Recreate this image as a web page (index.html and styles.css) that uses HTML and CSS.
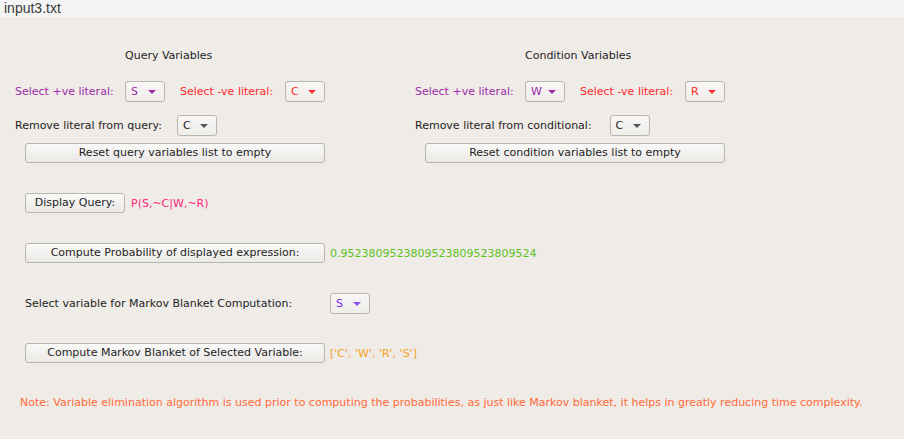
FILE: index.html
```html
<!DOCTYPE html>
<html>
<head>
<meta charset="utf-8">
<link rel="stylesheet" href="styles.css">
</head>
<body>
<div class="titlebar">input3.txt</div>
<div class="main">
  <div class="panels">
    <div class="panel">
      <div class="heading">Query Variables</div>
      <div class="row row-select">
        <span class="lbl pos">Select +ve literal:</span>
        <span class="dd dd-pos">S<i class="arrow"></i></span>
        <span class="lbl neg">Select -ve literal:</span>
        <span class="dd dd-neg">C<i class="arrow"></i></span>
      </div>
      <div class="row row-remove">
        <span class="lbl">Remove literal from query:</span>
        <span class="dd dd-plain">C<i class="arrow"></i></span>
      </div>
      <button class="btn btn-reset">Reset query variables list to empty</button>
    </div>
    <div class="panel">
      <div class="heading">Condition Variables</div>
      <div class="row row-select">
        <span class="lbl pos">Select +ve literal:</span>
        <span class="dd dd-pos">W<i class="arrow"></i></span>
        <span class="lbl neg">Select -ve literal:</span>
        <span class="dd dd-neg">R<i class="arrow"></i></span>
      </div>
      <div class="row row-remove">
        <span class="lbl lbl-cond">Remove literal from conditional:</span>
        <span class="dd dd-plain">C<i class="arrow"></i></span>
      </div>
      <button class="btn btn-reset">Reset condition variables list to empty</button>
    </div>
  </div>

  <div class="actions">
    <div class="action action-query">
      <button class="btn btn-small">Display Query:</button>
      <span class="out out-query">P(S,~C|W,~R)</span>
    </div>
    <div class="action">
      <button class="btn btn-wide">Compute Probability of displayed expression:</button>
      <span class="out out-prob">0.9523809523809523809523809524</span>
    </div>
    <div class="action action-markov">
      <span class="lbl lbl-markov">Select variable for Markov Blanket Computation:</span>
      <span class="dd dd-markov">S<i class="arrow"></i></span>
    </div>
    <div class="action">
      <button class="btn btn-wide">Compute Markov Blanket of Selected Variable:</button>
      <span class="out out-blanket">['C', 'W', 'R', 'S']</span>
    </div>
  </div>

  <div class="note">Note: Variable elimination algorithm is used prior to computing the probabilities, as just like Markov blanket, it helps in greatly reducing time complexity.</div>
</div>
</body>
</html>
```

FILE: styles.css
```css
* { box-sizing: border-box; }

html, body {
  margin: 0;
  padding: 0;
  background: #efebe7;
  width: 904px;
  height: 439px;
  overflow: hidden;
}

body {
  font-family: "DejaVu Sans", sans-serif;
  font-size: 11px;
  color: #1e1e1e;
}

.titlebar {
  height: 17px;
  background: #f4f4f4;
  font-family: "Liberation Sans", Arial, sans-serif;
  font-size: 14px;
  line-height: 16px;
  color: #3a3a3a;
  padding-left: 4px;
}

.main {
  padding-left: 15px;
}

.panels {
  display: flex;
  gap: 90px;
  margin-top: 32px;
}

.panel {
  width: 310px;
  display: flex;
  flex-direction: column;
}

.heading {
  height: 14px;
  line-height: 14px;
  padding-left: 110px;
}

.row {
  display: flex;
  align-items: center;
  height: 20px;
}

.row-select {
  margin-top: 18px;
  display: grid;
  grid-template-columns: 110px 55px 105px 40px;
  align-items: center;
}

.row-remove {
  margin-top: 14px;
  gap: 15px;
}

.lbl-cond { margin-right: 3px; }

.pos { color: #9d2aa8; }
.neg { color: #ff2a2a; }

.dd {
  width: 40px;
  height: 21px;
  border: 1px solid #b8b4af;
  border-radius: 3px;
  background: linear-gradient(#f8f7f6, #efedea);
  display: inline-flex;
  align-items: center;
  justify-content: space-between;
  padding: 0 8px 0 5px;
  line-height: 1;
}

.arrow {
  width: 0;
  height: 0;
  border-left: 4px solid transparent;
  border-right: 4px solid transparent;
  border-top: 4px solid currentColor;
  margin-top: 1px;
}

.dd-pos { color: #9d2aa8; }
.dd-neg { color: #ff2a2a; }
.dd-plain { color: #1e1e1e; }
.dd-plain .arrow { border-top-color: #555; }
.dd-markov { color: #7a26f2; }
.dd-markov .arrow { border-top-color: #8b4cf5; }

.btn {
  font-family: "DejaVu Sans", sans-serif;
  font-size: 11px;
  color: #1e1e1e;
  height: 20px;
  border: 1px solid #b8b4af;
  border-radius: 3px;
  background: linear-gradient(#f9f9f8, #ebe9e6);
  padding: 0;
  margin: 0;
  line-height: 18px;
}

.btn-reset {
  margin-top: 8px;
  margin-left: 10px;
  width: 300px;
}

.actions {
  padding-left: 10px;
  display: flex;
  flex-direction: column;
  gap: 30px;
  margin-top: 30px;
}

.action {
  display: flex;
  align-items: center;
  height: 20px;
}

.action-query { gap: 6px; }

.btn-small { width: 100px; }
.btn-wide { width: 300px; margin-right: 5px; }

.action-markov { height: 21px; margin-bottom: -1px; }
.lbl-markov { width: 305px; }

.out-query { color: #ff1f7d; }
.out-prob { color: #5cc21e; }
.out-blanket { color: #f5a21e; }

.note {
  margin-top: 33px;
  padding-left: 5px;
  color: #ff6a3a;
  line-height: 14px;
}
```
